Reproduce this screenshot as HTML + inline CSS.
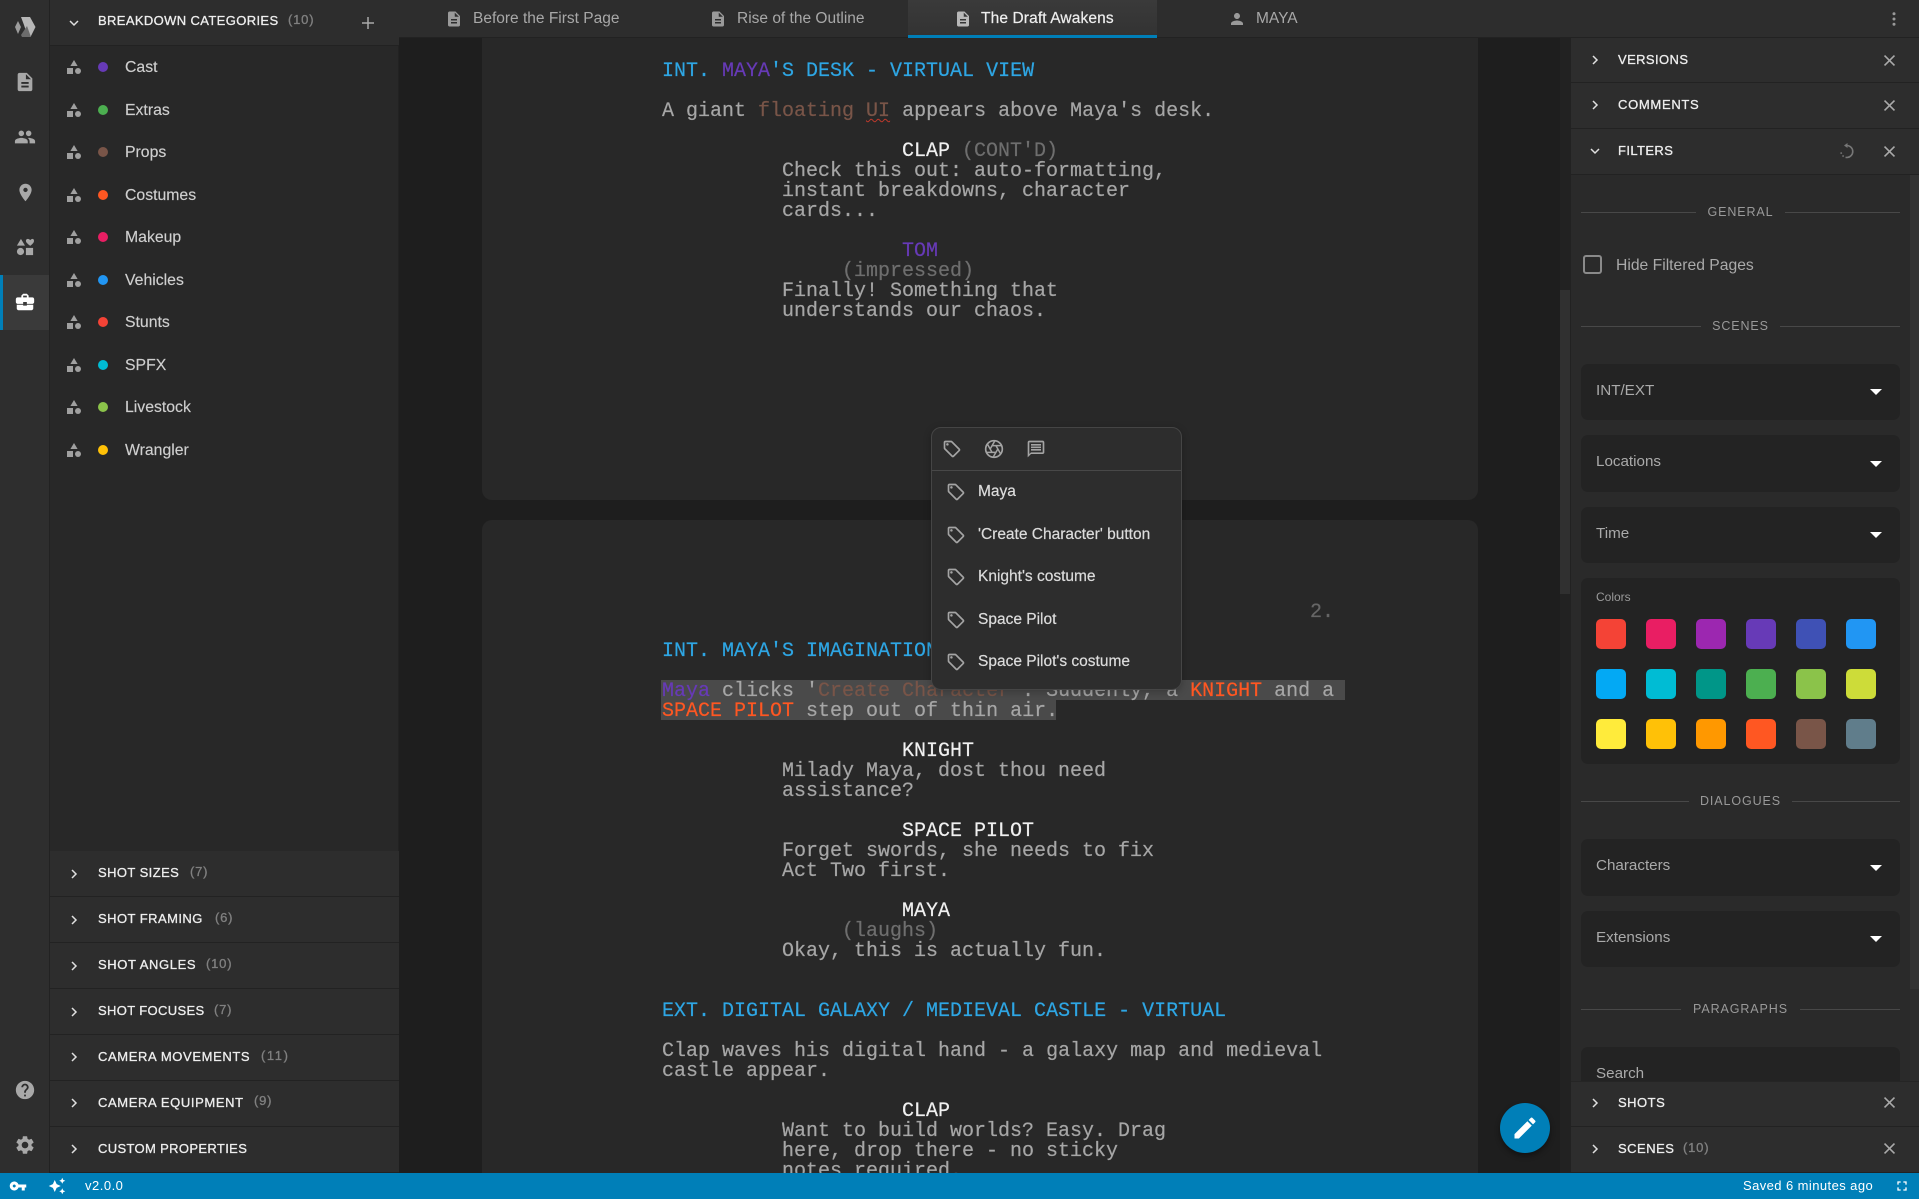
<!DOCTYPE html>
<html lang="en"><head><meta charset="utf-8"><title>The Draft Awakens</title>
<style>
html,body{margin:0;padding:0;background:#1e1e1e}
#app{position:relative;width:1919px;height:1199px;overflow:hidden;background:#1e1e1e;font-family:"Liberation Sans",Arial,sans-serif;color:#ccc}
.b{position:absolute;box-sizing:border-box}
.t{position:absolute;white-space:nowrap}
.h{font-size:13px;line-height:16px;letter-spacing:.5px;color:#eee;-webkit-text-stroke:.3px #eee}
.c{font-size:13px;line-height:16px;letter-spacing:.8px;color:#808080;-webkit-text-stroke:.3px #808080}
.i{font-size:15.8px;line-height:20px;color:#cfcfcf;-webkit-text-stroke:.15px #cfcfcf}
.tab{font-size:15.5px;line-height:20px;color:#a8a8a8}
.dv{font-size:12.5px;line-height:16px;letter-spacing:.9px;color:#999;text-align:center}
.s{font-size:15.2px;line-height:20px;color:#aaa}
.m{font-size:15.5px;line-height:20px;color:#dcdcdc;-webkit-text-stroke:.2px #dcdcdc}
.l{position:absolute;white-space:pre;font-family:"Liberation Mono",monospace;font-size:20px;line-height:20px;color:#a6a6a6;-webkit-text-stroke:.2px currentColor}
.sh{color:#2ea6e4}.ch{color:#f0f0f0}.pu{color:#673ab7}.br{color:#795548}.or{color:#ff5722}.pa{color:#6e6e6e}
svg{position:absolute;display:block;overflow:visible}
.hd{background:#2d2d2d;border-bottom:1px solid #222}
.box{background:#232323;border-radius:7px;left:1581px;width:319px}
.caret{position:absolute;width:0;height:0;border-left:6px solid transparent;border-right:6px solid transparent;border-top:6px solid #fff;left:1870px}
.sw{position:absolute;width:30px;height:30px;border-radius:5px}
.dot{position:absolute;width:10px;height:10px;border-radius:50%;left:98px}
.ln{position:absolute;height:1px;background:#484848}
</style></head>
<body><div id="app">
<svg width="0" height="0" style="position:absolute"><defs>
<symbol id="doc" viewBox="0 0 24 24"><path d="M14 2H6c-1.1 0-1.99.9-1.99 2L4 20c0 1.1.89 2 1.99 2H18c1.1 0 2-.9 2-2V8l-6-6zm2 16H8v-2h8v2zm0-4H8v-2h8v2zm-3-5V3.5L18.5 9H13z"/></symbol>
<symbol id="shapes" viewBox="0 0 14 14"><path d="M7 0l3.6 6H3.400z"/><rect x="0" y="8" width="6" height="6"/><circle cx="11" cy="11" r="3"/></symbol>
<symbol id="x" viewBox="0 0 24 24"><path d="M19 6.410L17.590 5 12 10.590 6.410 5 5 6.410 10.590 12 5 17.590 6.410 19 12 13.410 17.590 19 19 17.590 13.410 12z"/></symbol>
<symbol id="tag" viewBox="0 0 24 24"><path d="M21.410 11.580l-9-9C12.050 2.220 11.550 2 11 2H4c-1.100 0-2 .9-2 2v7c0 .55.22 1.050.59 1.420l9 9c.36.36.86.58 1.410.58s1.050-.22 1.410-.59l7-7c.37-.36.59-.86.59-1.410s-.23-1.060-.59-1.420zM13 20.010L4 11V4h7v-.01l9 9-7 7.020z"/><circle cx="6.500" cy="6.500" r="1.500"/></symbol>
</defs></svg>

<!-- document -->
<div class="b" style="left:399px;top:38px;width:1161px;height:1135px;background:#1e1e1e"></div>
<div class="b" style="left:482px;top:20px;width:996px;height:480px;background:#282828;border-radius:10px"></div>
<div class="b" style="left:482px;top:520px;width:996px;height:700px;background:#282828;border-radius:10px"></div>
<div class="b" style="left:1560px;top:38px;width:10px;height:1135px;background:#222"></div>
<div class="b" style="left:1560px;top:290px;width:10px;height:304px;background:#303030"></div>

<div class="l sh" style="left:662px;top:62px">INT. <span class="pu">MAYA</span>'S DESK - VIRTUAL VIEW</div>
<div class="l" style="left:662px;top:102px">A giant <span class="br">floating</span> <span class="br" style="text-decoration:underline wavy #c0392b 1px;text-underline-offset:2px">UI</span> appears above Maya's desk.</div>
<div class="l ch" style="left:902px;top:142px">CLAP <span class="pa">(CONT'D)</span></div>
<div class="l" style="left:782px;top:162px">Check this out: auto-formatting,</div>
<div class="l" style="left:782px;top:182px">instant breakdowns, character</div>
<div class="l" style="left:782px;top:202px">cards...</div>
<div class="l pu" style="left:902px;top:242px">TOM</div>
<div class="l pa" style="left:842px;top:262px">(impressed)</div>
<div class="l" style="left:782px;top:282px">Finally! Something that</div>
<div class="l" style="left:782px;top:302px">understands our chaos.</div>

<div class="l" style="left:1310px;top:603px;color:#666">2.</div>
<div class="l sh" style="left:662px;top:642px">INT. MAYA'S IMAGINATION - VIRTUAL</div>
<div class="b" style="left:661px;top:680px;width:684px;height:20px;background:#4a4a4a"></div>
<div class="b" style="left:661px;top:700px;width:395px;height:20px;background:#4a4a4a"></div>
<div class="l" style="left:662px;top:682px"><span class="pu">Maya</span> clicks '<span class="br">Create Character</span>'. Suddenly, a <span class="or">KNIGHT</span> and a</div>
<div class="l" style="left:662px;top:702px"><span class="or">SPACE PILOT</span> step out of thin air.</div>
<div class="l ch" style="left:902px;top:742px">KNIGHT</div>
<div class="l" style="left:782px;top:762px">Milady Maya, dost thou need</div>
<div class="l" style="left:782px;top:782px">assistance?</div>
<div class="l ch" style="left:902px;top:822px">SPACE PILOT</div>
<div class="l" style="left:782px;top:842px">Forget swords, she needs to fix</div>
<div class="l" style="left:782px;top:862px">Act Two first.</div>
<div class="l ch" style="left:902px;top:902px">MAYA</div>
<div class="l pa" style="left:842px;top:922px">(laughs)</div>
<div class="l" style="left:782px;top:942px">Okay, this is actually fun.</div>
<div class="l sh" style="left:662px;top:1002px">EXT. DIGITAL GALAXY / MEDIEVAL CASTLE - VIRTUAL</div>
<div class="l" style="left:662px;top:1042px">Clap waves his digital hand - a galaxy map and medieval</div>
<div class="l" style="left:662px;top:1062px">castle appear.</div>
<div class="l ch" style="left:902px;top:1102px">CLAP</div>
<div class="l" style="left:782px;top:1122px">Want to build worlds? Easy. Drag</div>
<div class="l" style="left:782px;top:1142px">here, drop there - no sticky</div>
<div class="l" style="left:782px;top:1162px">notes required.</div>

<!-- FAB -->
<div class="b" style="left:1500px;top:1103px;width:50px;height:50px;border-radius:50%;background:#007fb8;box-shadow:0 3px 6px rgba(0,0,0,.4)"></div>
<svg style="left:1511px;top:1114px" width="28" height="28" viewBox="0 0 24 24" fill="#fff"><path d="M3 17.250V21h3.750L17.810 9.940l-3.750-3.750L3 17.250zM20.710 7.040c.39-.39.39-1.020 0-1.410l-2.340-2.340c-.39-.39-1.020-.39-1.410 0l-1.830 1.830 3.750 3.750 1.830-1.830z"/></svg>

<!-- popup -->
<div class="b" style="left:931px;top:427px;width:251px;height:263px;background:#2d2d2d;border:1px solid #454545;border-radius:10px;box-shadow:0 2px 8px rgba(0,0,0,.25)"></div>
<div class="b" style="left:932px;top:470px;width:249px;height:1px;background:#484848"></div>
<svg style="left:942px;top:439px" width="20" height="20" fill="#a4a4a4"><use href="#tag"/></svg>
<svg style="left:984px;top:439px" width="20" height="20" viewBox="0 0 24 24" fill="none" stroke="#a4a4a4" stroke-width="2"><circle cx="12" cy="12" r="10"/><path stroke-width="1.800" d="M14.310 8l5.740 9.940M9.690 8h11.480M7.380 12l5.740-9.940M9.690 16L3.950 6.060M14.310 16H2.830M16.620 12l-5.740 9.940"/></svg>
<svg style="left:1026px;top:439px" width="20" height="20" viewBox="0 0 24 24" fill="#a4a4a4"><path d="M20 2H4c-1.100 0-2 .9-2 2v18l4-4h14c1.100 0 2-.9 2-2V4c0-1.100-.9-2-2-2zm0 14H6l-2 2V4h16v12zM6 12h12v2H6zm0-3h12v2H6zm0-3h12v2H6z"/></svg>
<svg style="left:946px;top:482px" width="20" height="20" fill="#a4a4a4"><use href="#tag"/></svg>
<svg style="left:946px;top:525px" width="20" height="20" fill="#a4a4a4"><use href="#tag"/></svg>
<svg style="left:946px;top:567px" width="20" height="20" fill="#a4a4a4"><use href="#tag"/></svg>
<svg style="left:946px;top:610px" width="20" height="20" fill="#a4a4a4"><use href="#tag"/></svg>
<svg style="left:946px;top:652px" width="20" height="20" fill="#a4a4a4"><use href="#tag"/></svg>
<div class="t m" style="left:978px;top:482px">Maya</div>
<div class="t m" style="left:978px;top:525px">'Create Character' button</div>
<div class="t m" style="left:978px;top:567px">Knight's costume</div>
<div class="t m" style="left:978px;top:610px">Space Pilot</div>
<div class="t m" style="left:978px;top:652px">Space Pilot's costume</div>

<!-- tab bar -->
<div class="b" style="left:399px;top:0;width:1520px;height:38px;background:#2d2d2d;border-bottom:1px solid #222"></div>
<div class="b" style="left:908px;top:0;width:249px;height:38px;background:linear-gradient(#3a3a3a,#333);border-bottom:3px solid #007fb8"></div>
<svg style="left:445px;top:10px" width="18" height="18" fill="#9a9a9a"><use href="#doc"/></svg>
<div class="t tab" style="left:473px;top:9px">Before the First Page</div>
<svg style="left:709px;top:10px" width="18" height="18" fill="#9a9a9a"><use href="#doc"/></svg>
<div class="t tab" style="left:737px;top:9px">Rise of the Outline</div>
<svg style="left:954px;top:10px" width="18" height="18" fill="#b8b8b8"><use href="#doc"/></svg>
<div class="t tab" style="left:981px;top:9px;color:#eee;letter-spacing:.12px;-webkit-text-stroke:.2px #eee">The Draft Awakens</div>
<svg style="left:1228px;top:10px" width="18" height="18" viewBox="0 0 24 24" fill="#9a9a9a"><path d="M12 12c2.210 0 4-1.790 4-4s-1.790-4-4-4-4 1.790-4 4 1.790 4 4 4zm0 2c-2.670 0-8 1.340-8 4v2h16v-2c0-2.660-5.330-4-8-4z"/></svg>
<div class="t tab" style="left:1256px;top:9px">MAYA</div>
<svg style="left:1885px;top:10px" width="18" height="18" viewBox="0 0 24 24" fill="#999"><circle cx="12" cy="5" r="2"/><circle cx="12" cy="12" r="2"/><circle cx="12" cy="19" r="2"/></svg>

<!-- rail -->
<div class="b" style="left:0;top:0;width:50px;height:1173px;background:#2e2e2e;border-right:1px solid #222"></div>
<div class="b" style="left:0;top:275px;width:49px;height:55px;background:#3a3a3a;border-left:3px solid #007fb8"></div>
<svg style="left:14px;top:17px" width="22" height="20" viewBox="0 0 22 20"><path d="M1 10l3-6 3 6-3 7z" fill="#9c9c9c"/><path d="M7 0h9l5.500 10-5 10H14L10 8z" fill="#b8b8b8"/><path d="M13 9l4 11H8l-1-2z" fill="#6c6c6c"/></svg>
<svg style="left:14px;top:71px" width="22" height="22" fill="#a8a8a8"><use href="#doc"/></svg>
<svg style="left:14px;top:126px" width="22" height="22" viewBox="0 0 24 24" fill="#a8a8a8"><path d="M16 11c1.660 0 2.990-1.340 2.990-3S17.660 5 16 5c-1.660 0-3 1.340-3 3s1.340 3 3 3zm-8 0c1.660 0 2.990-1.340 2.990-3S9.660 5 8 5C6.340 5 5 6.340 5 8s1.340 3 3 3zm0 2c-2.330 0-7 1.170-7 3.500V19h14v-2.500c0-2.330-4.670-3.500-7-3.500zm8 0c-.29 0-.62.02-.97.05 1.160.84 1.970 1.970 1.970 3.450V19h6v-2.500c0-2.330-4.670-3.500-7-3.500z"/></svg>
<svg style="left:14.500px;top:182px" width="21" height="21" viewBox="0 0 24 24" fill="#a8a8a8"><path d="M12 2C8.130 2 5 5.130 5 9c0 5.250 7 13 7 13s7-7.750 7-13c0-3.870-3.130-7-7-7zm0 9.500c-1.380 0-2.500-1.120-2.500-2.500s1.120-2.500 2.500-2.500 2.500 1.120 2.500 2.500-1.120 2.500-2.500 2.500z"/></svg>
<svg style="left:16px;top:238px" width="18" height="18" viewBox="0 0 20 20" fill="#a8a8a8"><path d="M5.500 1L10 8.500H1zM15.800 8.800c-3.300-2.600-4.800-3.900-4.800-5.700C11 1.800 12 1 13.200 1c.9 0 1.900.6 2.600 1.500C16.500 1.600 17.500 1 18.400 1 19.200 1 20 1.800 20 3.100c0 1.800-1 3.100-4.200 5.700z"/><circle cx="5" cy="15" r="4"/><rect x="11" y="11" width="8" height="8"/></svg>
<svg style="left:14px;top:291px" width="22" height="22" viewBox="0 0 24 24" fill="#fff"><path d="M10 16v-1H3.010L3 19c0 1.110.89 2 2 2h14c1.110 0 2-.89 2-2v-4h-7v1h-4zm10-9h-4.010V5l-2-2h-4l-2 2v2H4c-1.100 0-2 .9-2 2v3c0 1.110.89 2 2 2h6v-2h4v2h6c1.100 0 2-.9 2-2V9c0-1.100-.9-2-2-2zm-6 0h-4V5h4v2z"/></svg>
<svg style="left:14px;top:1079px" width="22" height="22" viewBox="0 0 24 24" fill="#a8a8a8"><path d="M12 2C6.480 2 2 6.480 2 12s4.480 10 10 10 10-4.480 10-10S17.520 2 12 2zm1 17h-2v-2h2v2zm2.070-7.750l-.9.92C13.450 12.900 13 13.500 13 15h-2v-.5c0-1.100.45-2.100 1.170-2.830l1.240-1.260c.37-.36.59-.86.59-1.410 0-1.100-.9-2-2-2s-2 .9-2 2H8c0-2.210 1.790-4 4-4s4 1.790 4 4c0 .88-.36 1.680-.93 2.250z"/></svg>
<svg style="left:14px;top:1134px" width="22" height="22" viewBox="0 0 24 24" fill="#a8a8a8"><path d="M19.140 12.940c.04-.3.06-.61.06-.94 0-.32-.02-.64-.07-.94l2.030-1.580c.18-.14.23-.41.12-.61l-1.920-3.320c-.12-.22-.37-.29-.59-.22l-2.390.96c-.5-.38-1.030-.7-1.620-.94l-.36-2.540c-.04-.24-.24-.41-.48-.41h-3.840c-.24 0-.43.17-.47.41l-.36 2.540c-.59.24-1.130.57-1.620.94l-2.390-.96c-.22-.08-.47 0-.59.22L2.740 8.870c-.12.21-.08.47.12.61l2.030 1.580c-.05.3-.09.63-.09.94s.02.64.07.94l-2.030 1.580c-.18.14-.23.41-.12.61l1.920 3.320c.12.22.37.29.59.22l2.390-.96c.5.38 1.030.7 1.620.94l.36 2.540c.05.24.24.41.48.41h3.840c.24 0 .44-.17.47-.41l.36-2.540c.59-.24 1.130-.56 1.620-.94l2.390.96c.22.08.47 0 .59-.22l1.920-3.320c.12-.22.07-.47-.12-.61l-2.010-1.580zM12 15.600c-1.980 0-3.600-1.620-3.600-3.600s1.620-3.600 3.600-3.600 3.600 1.620 3.600 3.600-1.620 3.600-3.600 3.600z"/></svg>

<!-- left panel -->
<div class="b" style="left:50px;top:0;width:349px;height:1173px;background:#282828;border-right:1px solid #222"></div>
<div class="b hd" style="left:50px;top:0;width:349px;height:46px"></div>
<svg style="left:69px;top:18px" width="10" height="10" viewBox="0 0 10 10" fill="none" stroke="#e0e0e0" stroke-width="1.500"><path d="M1 3l4 4 4-4"/></svg>
<div class="t h" style="left:98px;top:13px;letter-spacing:.37px">BREAKDOWN CATEGORIES</div>
<div class="t c" style="left:288px;top:12px">(10)</div>
<svg style="left:362px;top:17px" width="12" height="12" viewBox="0 0 12 12" fill="none" stroke="#aaa" stroke-width="1.500"><path d="M6 0v12M0 6h12"/></svg>

<svg style="left:67px;top:60px" width="14" height="14" fill="#a0a0a0"><use href="#shapes"/></svg><div class="dot" style="top:62px;background:#673ab7"></div><div class="t i" style="left:125px;top:58px">Cast</div>
<svg style="left:67px;top:103px" width="14" height="14" fill="#a0a0a0"><use href="#shapes"/></svg><div class="dot" style="top:105px;background:#4caf50"></div><div class="t i" style="left:125px;top:101px">Extras</div>
<svg style="left:67px;top:145px" width="14" height="14" fill="#a0a0a0"><use href="#shapes"/></svg><div class="dot" style="top:147px;background:#795548"></div><div class="t i" style="left:125px;top:143px">Props</div>
<svg style="left:67px;top:188px" width="14" height="14" fill="#a0a0a0"><use href="#shapes"/></svg><div class="dot" style="top:190px;background:#ff5722"></div><div class="t i" style="left:125px;top:186px">Costumes</div>
<svg style="left:67px;top:230px" width="14" height="14" fill="#a0a0a0"><use href="#shapes"/></svg><div class="dot" style="top:232px;background:#e91e63"></div><div class="t i" style="left:125px;top:228px">Makeup</div>
<svg style="left:67px;top:273px" width="14" height="14" fill="#a0a0a0"><use href="#shapes"/></svg><div class="dot" style="top:275px;background:#2196f3"></div><div class="t i" style="left:125px;top:271px">Vehicles</div>
<svg style="left:67px;top:315px" width="14" height="14" fill="#a0a0a0"><use href="#shapes"/></svg><div class="dot" style="top:317px;background:#f44336"></div><div class="t i" style="left:125px;top:313px">Stunts</div>
<svg style="left:67px;top:358px" width="14" height="14" fill="#a0a0a0"><use href="#shapes"/></svg><div class="dot" style="top:360px;background:#00bcd4"></div><div class="t i" style="left:125px;top:356px">SPFX</div>
<svg style="left:67px;top:400px" width="14" height="14" fill="#a0a0a0"><use href="#shapes"/></svg><div class="dot" style="top:402px;background:#8bc34a"></div><div class="t i" style="left:125px;top:398px">Livestock</div>
<svg style="left:67px;top:443px" width="14" height="14" fill="#a0a0a0"><use href="#shapes"/></svg><div class="dot" style="top:445px;background:#ffc107"></div><div class="t i" style="left:125px;top:441px">Wrangler</div>

<div class="b hd" style="left:50px;top:851px;width:349px;height:46px"></div>
<div class="b hd" style="left:50px;top:897px;width:349px;height:46px"></div>
<div class="b hd" style="left:50px;top:943px;width:349px;height:46px"></div>
<div class="b hd" style="left:50px;top:989px;width:349px;height:46px"></div>
<div class="b hd" style="left:50px;top:1035px;width:349px;height:46px"></div>
<div class="b hd" style="left:50px;top:1081px;width:349px;height:46px"></div>
<div class="b hd" style="left:50px;top:1127px;width:349px;height:46px"></div>
<svg style="left:69px;top:869px" width="10" height="10" viewBox="0 0 10 10" fill="none" stroke="#e0e0e0" stroke-width="1.500"><path d="M3 1l4 4-4 4"/></svg>
<svg style="left:69px;top:915px" width="10" height="10" viewBox="0 0 10 10" fill="none" stroke="#e0e0e0" stroke-width="1.500"><path d="M3 1l4 4-4 4"/></svg>
<svg style="left:69px;top:961px" width="10" height="10" viewBox="0 0 10 10" fill="none" stroke="#e0e0e0" stroke-width="1.500"><path d="M3 1l4 4-4 4"/></svg>
<svg style="left:69px;top:1007px" width="10" height="10" viewBox="0 0 10 10" fill="none" stroke="#e0e0e0" stroke-width="1.500"><path d="M3 1l4 4-4 4"/></svg>
<svg style="left:69px;top:1052px" width="10" height="10" viewBox="0 0 10 10" fill="none" stroke="#e0e0e0" stroke-width="1.500"><path d="M3 1l4 4-4 4"/></svg>
<svg style="left:69px;top:1098px" width="10" height="10" viewBox="0 0 10 10" fill="none" stroke="#e0e0e0" stroke-width="1.500"><path d="M3 1l4 4-4 4"/></svg>
<svg style="left:69px;top:1144px" width="10" height="10" viewBox="0 0 10 10" fill="none" stroke="#e0e0e0" stroke-width="1.500"><path d="M3 1l4 4-4 4"/></svg>
<div class="t h" style="left:98px;top:865px;letter-spacing:.42px">SHOT SIZES</div><div class="t c" style="left:190px;top:864px">(7)</div>
<div class="t h" style="left:98px;top:911px;letter-spacing:.45px">SHOT FRAMING</div><div class="t c" style="left:215px;top:910px">(6)</div>
<div class="t h" style="left:98px;top:957px;letter-spacing:.6px">SHOT ANGLES</div><div class="t c" style="left:206px;top:956px">(10)</div>
<div class="t h" style="left:98px;top:1003px;letter-spacing:.35px">SHOT FOCUSES</div><div class="t c" style="left:214px;top:1002px">(7)</div>
<div class="t h" style="left:98px;top:1049px;letter-spacing:.62px">CAMERA MOVEMENTS</div><div class="t c" style="left:261px;top:1048px;letter-spacing:1.6px">(11)</div>
<div class="t h" style="left:98px;top:1095px;letter-spacing:.62px">CAMERA EQUIPMENT</div><div class="t c" style="left:254px;top:1093px">(9)</div>
<div class="t h" style="left:98px;top:1141px;letter-spacing:.35px">CUSTOM PROPERTIES</div>

<!-- right panel -->
<div class="b" style="left:1570px;top:38px;width:349px;height:1135px;background:#2a2a2a;border-left:1px solid #222"></div>
<div class="b" style="left:1910px;top:174px;width:9px;height:907px;background:#2d2d2d"></div>
<div class="b" style="left:1910px;top:174px;width:9px;height:815px;background:#333"></div>
<div class="b hd" style="left:1571px;top:38px;width:348px;height:45px"></div>
<div class="b hd" style="left:1571px;top:83px;width:348px;height:46px"></div>
<div class="b hd" style="left:1571px;top:129px;width:348px;height:46px"></div>
<svg style="left:1590px;top:55px" width="10" height="10" viewBox="0 0 10 10" fill="none" stroke="#e0e0e0" stroke-width="1.500"><path d="M3 1l4 4-4 4"/></svg>
<svg style="left:1590px;top:100px" width="10" height="10" viewBox="0 0 10 10" fill="none" stroke="#e0e0e0" stroke-width="1.500"><path d="M3 1l4 4-4 4"/></svg>
<svg style="left:1590px;top:146px" width="10" height="10" viewBox="0 0 10 10" fill="none" stroke="#e0e0e0" stroke-width="1.500"><path d="M1 3l4 4 4-4"/></svg>
<div class="t h" style="left:1618px;top:52px;letter-spacing:.4px">VERSIONS</div>
<div class="t h" style="left:1618px;top:97px;letter-spacing:.7px">COMMENTS</div>
<div class="t h" style="left:1618px;top:143px;letter-spacing:.4px">FILTERS</div>
<svg style="left:1880px;top:51px" width="19" height="19" fill="#aaa"><use href="#x"/></svg>
<svg style="left:1880px;top:96px" width="19" height="19" fill="#aaa"><use href="#x"/></svg>
<svg style="left:1880px;top:142px" width="19" height="19" fill="#aaa"><use href="#x"/></svg>
<svg style="left:1838px;top:142px" width="18" height="18" viewBox="0 0 18 18" fill="none" stroke="#777" stroke-width="1.600"><path d="M8.500 3.500A6 6 0 0 1 9 15.500" /><path d="M9 15.500A6 6 0 0 1 3 9.500" stroke-dasharray="1.500 2"/><path d="M9.500 1L6 3.500 9.500 6z" fill="#777" stroke="none"/></svg>

<div class="ln" style="left:1581px;top:212px;width:115px"></div><div class="ln" style="left:1785px;top:212px;width:115px"></div>
<div class="t dv" style="left:1696px;width:89px;top:204px">GENERAL</div>
<div class="b" style="left:1583px;top:255px;width:19px;height:19px;border:2px solid #8a8a8a;border-radius:3px"></div>
<div class="t s" style="left:1616px;top:256px;font-size:15.7px">Hide Filtered Pages</div>
<div class="ln" style="left:1581px;top:326px;width:120px"></div><div class="ln" style="left:1780px;top:326px;width:120px"></div>
<div class="t dv" style="left:1701px;width:79px;top:318px">SCENES</div>

<div class="b box" style="top:364px;height:56px"></div><div class="t s" style="left:1596px;top:381px">INT/EXT</div><div class="caret" style="top:389px"></div>
<div class="b box" style="top:435px;height:57px"></div><div class="t s" style="left:1596px;top:452px">Locations</div><div class="caret" style="top:461px"></div>
<div class="b box" style="top:507px;height:56px"></div><div class="t s" style="left:1596px;top:524px">Time</div><div class="caret" style="top:532px"></div>
<div class="b box" style="top:578px;height:186px"></div>
<div class="t" style="left:1596px;top:589px;font-size:12px;line-height:16px;color:#9a9a9a">Colors</div>
<div class="sw" style="left:1596px;top:619px;background:#f44336"></div><div class="sw" style="left:1646px;top:619px;background:#e91e63"></div><div class="sw" style="left:1696px;top:619px;background:#9c27b0"></div><div class="sw" style="left:1746px;top:619px;background:#673ab7"></div><div class="sw" style="left:1796px;top:619px;background:#3f51b5"></div><div class="sw" style="left:1846px;top:619px;background:#2196f3"></div>
<div class="sw" style="left:1596px;top:669px;background:#03a9f4"></div><div class="sw" style="left:1646px;top:669px;background:#00bcd4"></div><div class="sw" style="left:1696px;top:669px;background:#009688"></div><div class="sw" style="left:1746px;top:669px;background:#4caf50"></div><div class="sw" style="left:1796px;top:669px;background:#8bc34a"></div><div class="sw" style="left:1846px;top:669px;background:#cddc39"></div>
<div class="sw" style="left:1596px;top:719px;background:#ffeb3b"></div><div class="sw" style="left:1646px;top:719px;background:#ffc107"></div><div class="sw" style="left:1696px;top:719px;background:#ff9800"></div><div class="sw" style="left:1746px;top:719px;background:#ff5722"></div><div class="sw" style="left:1796px;top:719px;background:#795548"></div><div class="sw" style="left:1846px;top:719px;background:#607d8b"></div>

<div class="ln" style="left:1581px;top:801px;width:108px"></div><div class="ln" style="left:1792px;top:801px;width:108px"></div>
<div class="t dv" style="left:1689px;width:103px;top:793px">DIALOGUES</div>
<div class="b box" style="top:839px;height:57px"></div><div class="t s" style="left:1596px;top:856px">Characters</div><div class="caret" style="top:865px"></div>
<div class="b box" style="top:911px;height:56px"></div><div class="t s" style="left:1596px;top:928px">Extensions</div><div class="caret" style="top:936px"></div>
<div class="ln" style="left:1581px;top:1009px;width:100px"></div><div class="ln" style="left:1800px;top:1009px;width:100px"></div>
<div class="t dv" style="left:1681px;width:119px;top:1001px">PARAGRAPHS</div>
<div class="b box" style="top:1047px;height:60px"></div><div class="t s" style="left:1596px;top:1064px">Search</div>

<div class="b hd" style="left:1571px;top:1081px;width:348px;height:46px;border-top:1px solid #252525"></div>
<div class="b hd" style="left:1571px;top:1127px;width:348px;height:46px"></div>
<svg style="left:1590px;top:1098px" width="10" height="10" viewBox="0 0 10 10" fill="none" stroke="#e0e0e0" stroke-width="1.500"><path d="M3 1l4 4-4 4"/></svg>
<svg style="left:1590px;top:1144px" width="10" height="10" viewBox="0 0 10 10" fill="none" stroke="#e0e0e0" stroke-width="1.500"><path d="M3 1l4 4-4 4"/></svg>
<div class="t h" style="left:1618px;top:1095px">SHOTS</div>
<div class="t h" style="left:1618px;top:1141px">SCENES</div><div class="t c" style="left:1683px;top:1140px">(10)</div>
<svg style="left:1880px;top:1093px" width="19" height="19" fill="#aaa"><use href="#x"/></svg>
<svg style="left:1880px;top:1139px" width="19" height="19" fill="#aaa"><use href="#x"/></svg>

<!-- status bar -->
<div class="b" style="left:0;top:1173px;width:1919px;height:26px;background:#007fb8"></div>
<svg style="left:9px;top:1177px" width="18" height="18" viewBox="0 0 24 24" fill="#fff"><path d="M12.650 10C11.830 7.670 9.610 6 7 6c-3.310 0-6 2.690-6 6s2.690 6 6 6c2.610 0 4.830-1.670 5.650-4H17v4h4v-4h2v-4H12.650zM7 14c-1.100 0-2-.9-2-2s.9-2 2-2 2 .9 2 2-.9 2-2 2z"/></svg>
<svg style="left:48px;top:1177px" width="18" height="18" viewBox="0 0 24 24" fill="#fff"><path d="M19 9l1.250-2.750L23 5l-2.750-1.250L19 1l-1.250 2.750L15 5l2.750 1.250L19 9zm-7.500.5L9 4 6.500 9.500 1 12l5.500 2.500L9 20l2.500-5.500L17 12l-5.500-2.500zM19 15l-1.250 2.750L15 19l2.750 1.250L19 23l1.250-2.750L23 19l-2.750-1.250L19 15z"/></svg>
<div class="t" style="left:85px;top:1176px;font-size:13px;line-height:20px;letter-spacing:.5px;color:#fff">v2.0.0</div>
<div class="t" style="left:1743px;top:1176px;font-size:13px;line-height:20px;letter-spacing:.42px;color:#fff">Saved 6 minutes ago</div>
<svg style="left:1894px;top:1178px" width="16" height="16" viewBox="0 0 24 24" fill="#fff"><path d="M7 14H5v5h5v-2H7v-3zm-2-4h2V7h3V5H5v5zm12 7h-3v2h5v-5h-2v3zM14 5v2h3v3h2V5h-5z"/></svg>
</div></body></html>
